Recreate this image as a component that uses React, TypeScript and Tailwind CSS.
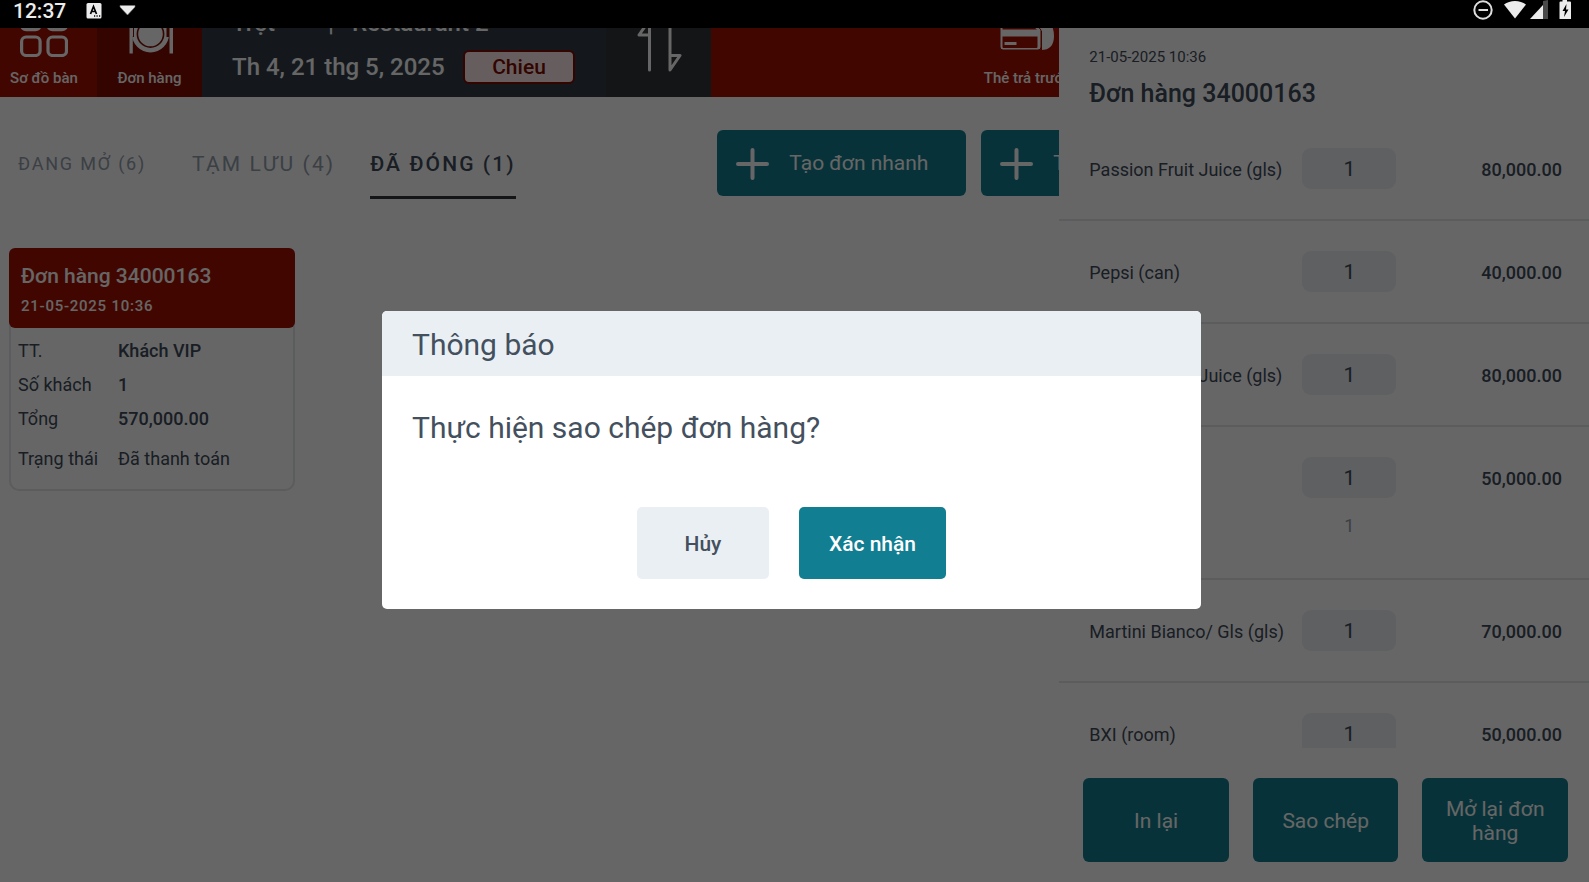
import React from 'react';

type OrderLine = { name: string; qty: number; price: string; sub?: string };

const lines: OrderLine[] = [
  { name: 'Passion Fruit Juice (gls)', qty: 1, price: '80,000.00' },
  { name: 'Pepsi (can)', qty: 1, price: '40,000.00' },
  { name: 'Passion Fruit Juice (gls)', qty: 1, price: '80,000.00' },
  { name: '', qty: 1, price: '50,000.00', sub: '1' },
  { name: 'Martini Bianco/ Gls (gls)', qty: 1, price: '70,000.00' },
  { name: 'BXI (room)', qty: 1, price: '50,000.00' },
];

const details = [
  { label: 'TT.', value: 'Khách VIP', row: 'h-[34px] font-medium' },
  { label: 'Số khách', value: '1', row: 'h-[34px] font-medium' },
  { label: 'Tổng', value: '570,000.00', row: 'h-[34px] font-medium' },
  { label: 'Trạng thái', value: 'Đã thanh toán', row: 'h-[46px]' },
];

function StatusBar() {
  return (
    <div className="flex h-7 shrink-0 items-start bg-black pl-[13px] text-[#ececec]">
      <time className="text-[21px] leading-[22px] font-medium">12:37</time>
      <svg className="mt-[3px] ml-5 h-4 w-4" viewBox="0 0 16 16">
        <rect x="0.5" y="0" width="15" height="15.5" rx="1.5" fill="#ececec" />
        <path d="M4.5 11 7.5 3.5 10.5 11M5.5 8.5h4" fill="none" stroke="#000" strokeWidth="1.7" />
        <path d="M8 13h1.2M10.5 13h1.2M13 13h1.2" stroke="#000" strokeWidth="1.3" />
      </svg>
      <svg className="mt-[5px] ml-[17px] h-[11px] w-[17px]" viewBox="0 0 17 11">
        <path d="M1 .5h15v1.500L8.500 10 1 2z" fill="#ececec" stroke="#777" strokeWidth=".6" />
      </svg>
      <div className="ml-auto flex items-start pr-[18px]">
        <svg className="h-5 w-5" viewBox="0 0 20 20" fill="none" stroke="#dedede">
          <circle cx="10" cy="10" r="8.700" strokeWidth="2" />
          <path d="M5.500 10h9.500" strokeWidth="2" />
        </svg>
        <svg className="ml-[10px] h-[19px] w-6" viewBox="0 0 24 19">
          <path d="M1 4.500C7-.3 17-.3 23 4.500L12 18.500z" fill="#ececec" />
        </svg>
        <svg className="ml-[3px] h-5 w-[19px]" viewBox="0 0 19 20">
          <path d="M13 1 18 0v19h-5z" fill="#4a4a4a" />
          <path d="M0 19 13 5v14z" fill="#ececec" />
        </svg>
        <svg className="ml-[10px] h-5 w-3" viewBox="0 0 12 20">
          <path d="M1.500 1.500H3.500V0h4.500v1.500H11q1 0 1 1V19H.5V2.500q0-1 1-1z" fill="#ececec" />
          <path d="M7.500 4 3.500 11h2.500l-1 6 4.500-7.500H7z" fill="#000" />
        </svg>
      </div>
    </div>
  );
}

function GridIcon() {
  return (
    <svg className="h-12 w-12" viewBox="0 0 48 48" fill="none" stroke="#fff" strokeWidth="3.200">
      <rect x="1.600" y="1.600" width="18.500" height="19" rx="4.500" />
      <rect x="28" y="1.600" width="18.500" height="19" rx="4.500" />
      <rect x="1.600" y="28" width="18.500" height="18.500" rx="4.500" />
      <rect x="28" y="28" width="18.500" height="18.500" rx="4.500" />
    </svg>
  );
}

function PlateIcon() {
  return (
    <svg className="h-12 w-12" viewBox="0 0 48 48">
      <circle cx="24.500" cy="25" r="12.300" fill="#fff" />
      <circle cx="24.500" cy="25" r="16.200" fill="none" stroke="#fff" strokeWidth="4.600" />
      <path d="M0 0h8v28H0zM40.500 0H48v28h-7.500z" fill="#800c00" />
      <path d="M3.500 8v11h1.500V8M6.500 8v11h1.500V8M3.500 27h3.300v17.500H3.500zM41 8h6v11h-6zM43.500 27h3.500v17.500h-3.500z" fill="#fff" />
      <path d="M3.500 19h3.500v8H3.500zM43.500 19H47v8h-3.500z" fill="#fff" />
    </svg>
  );
}

function SwapIcon() {
  return (
    <svg className="h-14 w-12" viewBox="0 0 48 56" fill="none" stroke="#fff" strokeWidth="3" strokeLinejoin="round" strokeLinecap="round">
      <path d="M14.500 54V4L4 19h10.500M35 4v50l10-14.500H35" />
    </svg>
  );
}

function CardsIcon() {
  return (
    <svg className="h-10 w-14" viewBox="0 0 56 40">
      <path d="M16 0h22q17 8 17 24 0 14-13 14l-2-22z" fill="#fff" />
      <path d="M3 10h32l7 8v17q0 3-3 3H4q-3 0-3-3V12q0-2 2-2z" fill="#fff" stroke="#a50f00" strokeWidth="1" />
      <path d="M3.500 15.500h32l2.500 2H3.500zM3.500 24.500h35v10.500q0 1-1 1h-33q-1 0-1-1z" fill="#a50f00" />
      <path d="M5.500 31.500h12" stroke="#fff" strokeWidth="3" />
      <path d="M42.500 19v19" stroke="#a50f00" strokeWidth="1" />
    </svg>
  );
}

function PlusIcon() {
  return (
    <svg className="h-[34px] w-[34px]" viewBox="0 0 34 34" stroke="#fff" strokeWidth="4" strokeLinecap="round">
      <path d="M17.500 3v28M3 17h29" />
    </svg>
  );
}

function TopBar() {
  const tool = 'flex h-[90px] shrink-0 flex-col items-center justify-end pb-[9px] text-[15px] leading-[20px] font-medium whitespace-nowrap text-white';
  return (
    <header className="flex h-[69px] shrink-0 items-end overflow-hidden bg-[#a50f00]">
      <button className={`${tool} w-[97px] gap-[11px] pr-[9px]`}>
        <GridIcon />
        Sơ đồ bàn
      </button>
      <button className={`${tool} w-[105px] gap-[11px] bg-[#800c00]`}>
        <PlateIcon />
        Đơn hàng
      </button>
      <div className="flex h-[90px] w-[404px] shrink-0 flex-col justify-end bg-[#323c46] pb-[13px] pl-[30px] text-[24px] leading-[34px] font-medium text-white">
        <div className="mb-[10px] flex whitespace-nowrap">
          <span className="w-24">Trệt</span>
          <span className="w-6">|</span>
          <span>Restaurant 2</span>
        </div>
        <div className="flex items-center gap-4 whitespace-nowrap">
          <span className="w-[215px]">Th 4, 21 thg 5, 2025</span>
          <button className="h-[34px] w-28 rounded-[6px] border-2 border-[#800c00] bg-[#ffebeb] pt-px text-[21px] leading-[29px] text-[#800c00]">
            Chieu
          </button>
        </div>
      </div>
      <button aria-label="Đổi" className="flex h-[90px] w-[105px] shrink-0 items-end justify-center bg-[#323539] pb-[25px]">
        <SwapIcon />
      </button>
      <div className="flex flex-1 justify-end">
        <button className={`${tool} -mr-[22px] w-[108px] gap-4`}>
          <CardsIcon />
          Thẻ trả trước
        </button>
      </div>
    </header>
  );
}

function OrderCard() {
  return (
    <article className="w-[286px] text-[#404b5a]">
      <div className="relative h-20 rounded-[6px] bg-[#a50f00] px-3 pt-[13px] font-medium text-white">
        <h2 className="text-[21px] leading-[30px]">Đơn hàng 34000163</h2>
        <p className="text-[15px] leading-[30px] tracking-wider">21-05-2025 10:36</p>
      </div>
      <dl className="-mt-2 rounded-b-[10px] border-2 border-t-0 border-[#e4e6e8] px-[7px] pt-[13px] pb-2 text-[18px]">
        {details.map((d) => (
          <div key={d.label} className={`flex items-center ${d.row}`}>
            <dt className="w-[100px] font-normal">{d.label}</dt>
            <dd>{d.value}</dd>
          </div>
        ))}
      </dl>
    </article>
  );
}

function Orders() {
  const create = 'flex h-[66px] w-[249px] shrink-0 items-center gap-5 rounded-[6px] bg-[#147e8e] pt-[2px] pl-[18px] text-[21px] whitespace-nowrap text-white';
  return (
    <div className="flex-1 overflow-hidden pt-[33px]">
      <div className="flex items-start">
        <nav className="flex h-[69px] min-w-0 flex-1 items-start pl-[18px] whitespace-nowrap text-[#94a0ac]">
          <button className="mr-[46px] h-[66px] text-[18px] tracking-widest">ĐANG MỞ (6)</button>
          <button className="mr-[35px] h-[66px] pt-[3px] text-[21px] tracking-widest">TẠM LƯU (4)</button>
          <button className="h-[69px] border-b-3 border-[#323539] pt-[3px] text-[21px] font-medium tracking-widest text-[#404b5a]">ĐÃ ĐÓNG (1)</button>
        </nav>
        <div className="-mr-[171px] flex shrink-0 gap-[15px]">
          <button className={create}>
            <PlusIcon />
            Tạo đơn nhanh
          </button>
          <button className={create}>
            <PlusIcon />
            Tạo đơn
          </button>
        </div>
      </div>
      <div className="pt-[49px] pl-[9px]">
        <OrderCard />
      </div>
    </div>
  );
}

function OrderPanel() {
  const action = 'h-[84px] flex-1 rounded-[6px] bg-[#147e8e] px-4 pt-[2px] text-[21px] leading-6 text-white';
  return (
    <aside className="flex w-1/3 shrink-0 flex-col bg-white text-[#404b5a]">
      <div className="h-[90px] shrink-0 px-[30px] pt-[18px]">
        <p className="text-[15px] leading-[22px]">21-05-2025 10:36</p>
        <h1 className="pt-[10px] text-[25px] leading-[32px] font-medium">Đơn hàng 34000163</h1>
      </div>
      <ul className="min-h-0 flex-1 overflow-hidden text-[18px]">
        {lines.map((l, i) => (
          <li key={i} className="border-b-2 border-[#e4e6e8] py-[30px] pr-[27px] pl-[30px]">
            <div className="flex items-center">
              <span className="w-[213px] pt-[2px]">{l.name}</span>
              <input
                readOnly
                aria-label="Số lượng"
                value={l.qty}
                className="h-[41px] w-[94px] rounded-[9px] bg-[#ebeff4] pt-px text-center text-[21px]"
              />
              <span className="flex-1 pt-[2px] text-right font-medium">{l.price}</span>
            </div>
            {l.sub && <div className="ml-[213px] w-[94px] pt-[14px] pb-2 text-center leading-7 text-[#94a0ac]">{l.sub}</div>}
          </li>
        ))}
      </ul>
      <div className="flex shrink-0 gap-6 pt-[30px] pr-[21px] pb-5 pl-6">
        <button className={action}>In lại</button>
        <button className={action}>Sao chép</button>
        <button className={action}>Mở lại đơn hàng</button>
      </div>
    </aside>
  );
}

function ConfirmDialog() {
  return (
    <div className="absolute inset-0 z-10 flex items-center justify-center bg-black/60 pt-[10px] pr-[6px]">
      <div role="dialog" aria-modal="true" aria-labelledby="dialog-title" className="w-[819px] overflow-hidden rounded-[5px] bg-white text-[#44505e]">
        <h2 id="dialog-title" className="bg-[#eaeff4] px-[30px] pt-[2px] text-[30px] leading-[63px]">Thông báo</h2>
        <p className="px-[30px] pt-[31px] text-[30px] leading-[42px]">Thực hiện sao chép đơn hàng?</p>
        <div className="flex justify-center gap-[30px] pt-[58px] pb-[30px] text-[21px] font-medium">
          <button className="h-[72px] min-w-[132px] rounded-[5px] bg-[#eaeff4] px-[30px] pt-[3px]">Hủy</button>
          <button className="h-[72px] min-w-[147px] rounded-[5px] bg-[#117e92] px-[30px] pt-[3px] text-white">Xác nhận</button>
        </div>
      </div>
    </div>
  );
}

export default function App() {
  return (
    <div className="flex h-screen flex-col overflow-hidden bg-white font-[Roboto,sans-serif]">
      <StatusBar />
      <div className="relative flex min-h-0 flex-1">
        <main className="flex min-w-0 flex-1 flex-col overflow-hidden">
          <TopBar />
          <Orders />
        </main>
        <OrderPanel />
        <ConfirmDialog />
      </div>
    </div>
  );
}
